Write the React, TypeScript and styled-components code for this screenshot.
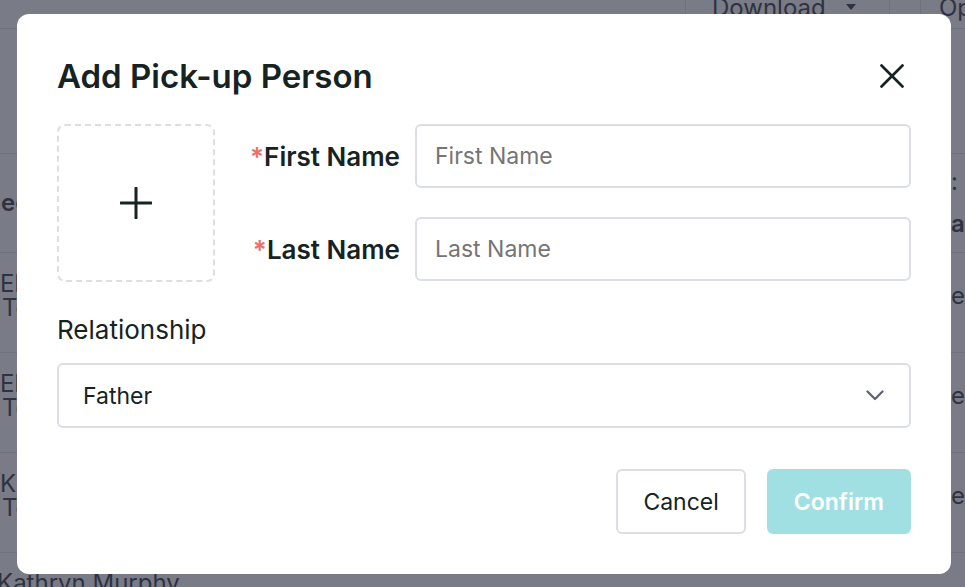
import React from 'react'
import styled, { createGlobalStyle } from 'styled-components'

const GlobalStyle = createGlobalStyle`
    html, body {
        margin: 0;
        padding: 0;
        font-family: Inter, "Noto Sans", "Liberation Sans", sans-serif;
    }

    * {
        box-sizing: border-box;
    }
`

const INK = '#162322'
const LINE = '#dcdee5'

/* ---------- page behind the dialog ---------- */

const Page = styled.div`
    position: relative;
    height: 100vh;
    overflow: hidden;
    background: #ffffff;
    color: #3c3f4a;
`

const Toolbar = styled.div`
    display: flex;
    align-items: center;
    height: 43px;
    margin-top: -14px;
    padding-left: 685px;
    border-bottom: 1px solid #e4e4e8;
`

const ToolButton = styled.div<{ width: number }>`
    display: flex;
    align-items: center;
    justify-content: space-between;
    flex-shrink: 0;
    width: ${p => p.width}px;
    height: 100%;
    padding: 0 31px 0 26px;
    border-left: 1px solid #e4e4e8;
    border-right: 1px solid #e4e4e8;
    font-size: 24px;

    & + & {
        margin-left: 30px;
        padding-left: 18px;
    }
`

const TableHead = styled.div`
    display: flex;
    justify-content: space-between;
    align-items: center;
    height: 100px;
    margin-top: 124px;
    border-top: 1px solid #e4e4e8;
    border-bottom: 1px solid #e4e4e8;
    font-weight: 600;
    font-size: 24px;
`

const Row = styled.div`
    display: flex;
    justify-content: space-between;
    align-items: center;
    height: 100px;
    padding-bottom: 14px;
    border-bottom: 1px solid #e4e4e8;
    font-size: 24px;
`

const LastRow = styled(Row)`
    align-items: flex-start;
    padding: 19px 0 0;
`

const Cell = styled.div<{ shift?: number }>`
    display: flex;
    flex-direction: column;
    gap: 2px;
    margin-left: ${p => p.shift ?? 0}px;
    line-height: 22px;
    white-space: nowrap;
`

const SubLine = styled.span`
    padding-left: 2px;
`

const EndCell = styled.div`
    width: 14px;
    white-space: nowrap;
    line-height: 22px;
`

const SmallNote = styled.span`
    font-weight: 400;
    display: block;
    margin-bottom: 20px;
`

/* ---------- dialog ---------- */

const Overlay = styled.div`
    position: fixed;
    inset: 0;
    background: rgba(38, 42, 60, 0.62);
    padding: 14px 0 0 17px;
`

const Dialog = styled.div`
    width: 934px;
    height: 560px;
    background: #ffffff;
    border-radius: 12px;
    padding: 40px;
    color: ${INK};
`

const Header = styled.div`
    display: flex;
    justify-content: space-between;
    align-items: center;
    height: 44px;
`

const Title = styled.h2`
    margin: 0;
    font-size: 33px;
    font-weight: 600;
`

const CloseButton = styled.button`
    display: flex;
    align-items: center;
    justify-content: center;
    width: 32px;
    height: 32px;
    margin-right: 3px;
    padding: 0;
    border: none;
    background: none;
    cursor: pointer;
`

const Top = styled.div`
    display: flex;
    margin-top: 26px;
`

const Upload = styled.div`
    display: flex;
    align-items: center;
    justify-content: center;
    width: 158px;
    height: 158px;
    flex-shrink: 0;
    border: 2px dashed ${LINE};
    border-radius: 8px;
`

const Fields = styled.div`
    flex: 1;
    display: flex;
    flex-direction: column;
    gap: 29px;
`

const FieldRow = styled.div`
    display: flex;
    justify-content: flex-end;
    align-items: center;
    gap: 15px;
`

const Label = styled.label`
    font-size: 26px;
    font-weight: 600;
    white-space: nowrap;
`

const Star = styled.span`
    color: #f26b6b;
`

const Input = styled.input`
    width: 496px;
    height: 64px;
    padding: 0 18px;
    border: 2px solid ${LINE};
    border-radius: 6px;
    font-family: inherit;
    font-size: 23px;
    color: ${INK};
    outline: none;

    ::placeholder {
        color: #6b6e7c;
    }
`

const PlainLabel = styled.div`
    margin-top: 34px;
    font-size: 26px;
    line-height: 28px;
`

const Select = styled.div`
    display: flex;
    justify-content: space-between;
    align-items: center;
    height: 65px;
    margin-top: 19px;
    padding: 0 25px 0 24px;
    border: 2px solid ${LINE};
    border-radius: 6px;
    font-size: 23px;
`

const Footer = styled.div`
    display: flex;
    justify-content: flex-end;
    gap: 21px;
    margin-top: 41px;
`

const Button = styled.button<{ primary?: boolean }>`
    height: 65px;
    padding: 0 25px;
    border-radius: 6px;
    border: 2px solid ${p => (p.primary ? '#a1e0e2' : LINE)};
    background: ${p => (p.primary ? '#a1e0e2' : '#ffffff')};
    color: ${p => (p.primary ? '#ffffff' : INK)};
    font-family: inherit;
    font-size: 23px;
    font-weight: ${p => (p.primary ? 600 : 400)};
    cursor: pointer;
`

const people = [
    ['Eliza Bennett', 'Teacher'],
    ['Elias Grant', 'Teacher'],
    ['Karen Hughes', 'Teacher'],
]

function Background() {
    return (
        <Page>
            <Toolbar>
                <ToolButton width={205}>
                    Download
                    <svg width="14" height="10" viewBox="0 0 14 10">
                        <path d="M2 2 7 8 12 2Z" fill="#3c3f4a" />
                    </svg>
                </ToolButton>
                <ToolButton width={80}>Options</ToolButton>
            </Toolbar>
            <TableHead>
                <Cell shift={-35}>Select</Cell>
                <EndCell>
                    <SmallNote>:</SmallNote>
                    at
                </EndCell>
            </TableHead>
            {people.map(([name, role]) => (
                <Row key={name}>
                    <Cell>
                        <span>{name}</span>
                        <SubLine>{role}</SubLine>
                    </Cell>
                    <EndCell>e</EndCell>
                </Row>
            ))}
            <LastRow>
                <Cell shift={-3}>Kathryn Murphy</Cell>
            </LastRow>
        </Page>
    )
}

export default function App() {
    return (
        <>
            <GlobalStyle />
            <Background />
            <Overlay>
                <Dialog>
                    <Header>
                        <Title>Add Pick-up Person</Title>
                        <CloseButton aria-label="Close">
                            <svg width="24" height="24" viewBox="0 0 24 24">
                                <path d="M1.5 1.5 22.5 22.5M22.5 1.5 1.5 22.5" stroke={INK} strokeWidth="2.7" strokeLinecap="round" />
                            </svg>
                        </CloseButton>
                    </Header>

                    <Top>
                        <Upload>
                            <svg width="32" height="32" viewBox="0 0 32 32">
                                <path d="M16 1v30M1 16h30" stroke={INK} strokeWidth="3" strokeLinecap="round" />
                            </svg>
                        </Upload>
                        <Fields>
                            <FieldRow>
                                <Label><Star>*</Star>First Name</Label>
                                <Input placeholder="First Name" />
                            </FieldRow>
                            <FieldRow>
                                <Label><Star>*</Star>Last Name</Label>
                                <Input placeholder="Last Name" />
                            </FieldRow>
                        </Fields>
                    </Top>

                    <PlainLabel>Relationship</PlainLabel>
                    <Select>
                        Father
                        <svg width="18" height="11" viewBox="0 0 18 11">
                            <path d="M1.5 1.5 9 9l7.5-7.5" fill="none" stroke="#5f6170" strokeWidth="2.2" strokeLinecap="round" strokeLinejoin="round" />
                        </svg>
                    </Select>

                    <Footer>
                        <Button>Cancel</Button>
                        <Button primary>Confirm</Button>
                    </Footer>
                </Dialog>
            </Overlay>
        </>
    )
}
